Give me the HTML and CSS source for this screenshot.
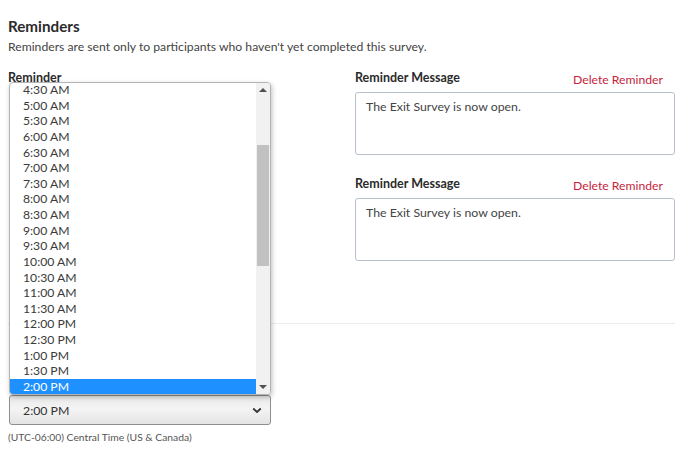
FILE: index.html
```html
<!DOCTYPE html>
<html>
<head>
<meta charset="utf-8">
<link rel="stylesheet" href="styles.css">
</head>
<body>
<div class="page">
  <h2 class="title">Reminders</h2>
  <p class="subtitle">Reminders are sent only to participants who haven't yet completed this survey.</p>

  <div class="reminder-row">
    <div class="left-col">
      <div class="label">Reminder</div>
    </div>
    <div class="right-col">
      <div class="msg-head">
        <span class="label">Reminder Message</span>
        <a class="delete">Delete Reminder</a>
      </div>
      <div class="textarea">The Exit Survey is now open.</div>
    </div>
  </div>

  <div class="reminder-row second">
    <div class="left-col"></div>
    <div class="right-col">
      <div class="msg-head">
        <span class="label">Reminder Message</span>
        <a class="delete">Delete Reminder</a>
      </div>
      <div class="textarea">The Exit Survey is now open.</div>
    </div>
  </div>

  <div class="divider"></div>

  <div class="time-field">
    <div class="listbox">
      <ul class="options">
        <li>4:30 AM</li>
        <li>5:00 AM</li>
        <li>5:30 AM</li>
        <li>6:00 AM</li>
        <li>6:30 AM</li>
        <li>7:00 AM</li>
        <li>7:30 AM</li>
        <li>8:00 AM</li>
        <li>8:30 AM</li>
        <li>9:00 AM</li>
        <li>9:30 AM</li>
        <li>10:00 AM</li>
        <li>10:30 AM</li>
        <li>11:00 AM</li>
        <li>11:30 AM</li>
        <li>12:00 PM</li>
        <li>12:30 PM</li>
        <li>1:00 PM</li>
        <li>1:30 PM</li>
        <li class="selected">2:00 PM</li>
      </ul>
      <div class="scrollbar">
        <span class="arrow up"></span>
        <span class="thumb"></span>
        <span class="arrow down"></span>
      </div>
    </div>
    <div class="select">
      <span>2:00 PM</span>
      <svg class="chev" width="10" height="7" viewBox="0 0 10 7"><path d="M1.2 1.5 L5 5 L8.8 1.5" fill="none" stroke="#333" stroke-width="1.8"/></svg>
    </div>
    <div class="tz">(UTC-06:00) Central Time (US &amp; Canada)</div>
  </div>
</div>
</body>
</html>
```
FILE: styles.css
```css
* { box-sizing: border-box; }
html, body { margin: 0; padding: 0; background: #fff; }
body {
  font-family: Lato, "Open Sans", Arial, sans-serif;
  color: #333;
  font-size: 12.3px;
}
.page {
  width: 675px;
  padding: 16px 0 0 8px;
}
.title {
  margin: 0;
  font-size: 15.2px;
  line-height: 20px;
  font-weight: 700;
  color: #2b2b2b;
}
.subtitle {
  margin: 3px 0 0;
  font-size: 12.2px;
  line-height: 16px;
  color: #444;
}
.reminder-row {
  display: grid;
  grid-template-columns: 263px 320px;
  column-gap: 84px;
  margin-top: 15px;
}
.reminder-row.second { margin-top: 21px; }
.label {
  font-weight: 700;
  font-size: 12.5px;
  line-height: 16px;
  color: #2b2b2b;
}
.msg-head {
  display: flex;
  justify-content: space-between;
  align-items: flex-end;
  height: 16px;
  margin-bottom: 6px;
  padding-right: 12px;
}
.delete {
  color: #c4243d;
  font-size: 12.2px;
  line-height: 16px;
  position: relative;
  top: 2px;
}
.textarea {
  height: 63px;
  border: 1px solid #b9c1cc;
  border-radius: 3px;
  padding: 6px 10px;
  color: #444;
  line-height: 16px;
}
.divider {
  height: 1px;
  background: #ececec;
  margin-top: 62px;
}
.time-field {
  position: relative;
  margin-top: 71px;
  width: 263px;
}
.select {
  margin-left: 1px;
  width: 262px;
  height: 30px;
  border: 1px solid #8d8d8d;
  border-radius: 3px;
  background: linear-gradient(#e8e8e8, #f4f4f4 45%, #e4e4e4);
  display: flex;
  align-items: center;
  justify-content: space-between;
  padding: 0 8px 0 13px;
  color: #333;
}
.chev { margin-top: 1px; }
.tz {
  margin-top: 5px;
  font-size: 10.3px;
  line-height: 14px;
  color: #555;
}
.listbox {
  position: absolute;
  left: 1px;
  bottom: 100%;
  width: 262px;
  height: 313px;
  border: 1px solid #b4b4b4;
  border-radius: 4px;
  background: #fff;
  box-shadow: 1px 2px 5px rgba(0,0,0,0.25);
  display: flex;
  overflow: hidden;
  z-index: 5;
}
.options {
  list-style: none;
  margin: -1px 0 0;
  padding: 0;
  flex: 1;
}
.options li {
  height: 15.63px;
  line-height: 15.63px;
  padding-left: 13px;
  color: #3a3a3a;
  font-size: 12.2px;
}
.options li.selected {
  background: #1e90ff;
  color: #fff;
  border-bottom-left-radius: 3px;
}
.scrollbar {
  width: 14px;
  background: #f1f1f1;
  position: relative;
}
.thumb {
  position: absolute;
  left: 1px;
  right: 1px;
  top: 62px;
  height: 121px;
  background: #c1c1c1;
}
.arrow {
  position: absolute;
  left: 3px;
  width: 0;
  height: 0;
  border-left: 4px solid transparent;
  border-right: 4px solid transparent;
}
.arrow.up { top: 5px; border-bottom: 4px solid #505050; }
.arrow.down { bottom: 5px; border-top: 4px solid #505050; }
```
